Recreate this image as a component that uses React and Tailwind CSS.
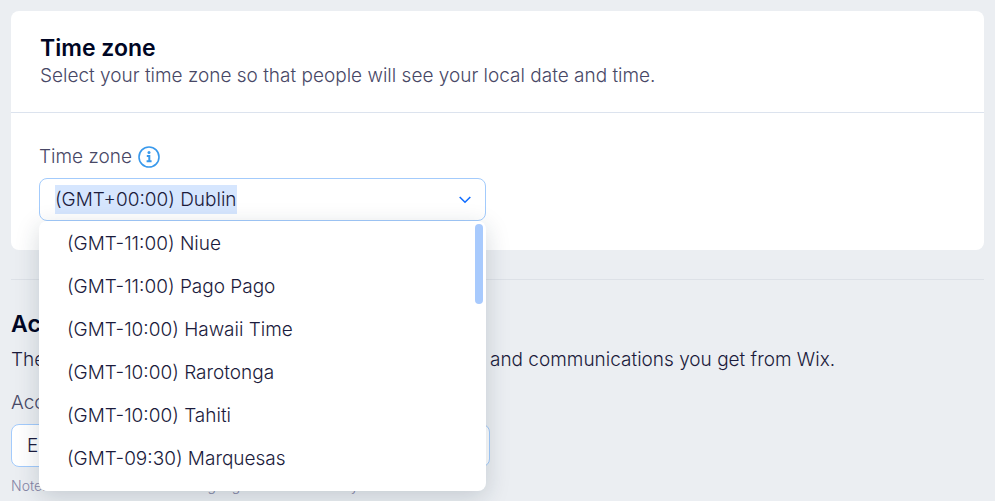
import { useEffect, useRef } from "react";

const zones = [
  "(GMT-11:00) Niue",
  "(GMT-11:00) Pago Pago",
  "(GMT-10:00) Hawaii Time",
  "(GMT-10:00) Rarotonga",
  "(GMT-10:00) Tahiti",
  "(GMT-09:30) Marquesas",
];

function InfoIcon() {
  return (
    <svg width="22" height="22" viewBox="0 0 22 22" fill="none" aria-hidden="true">
      <circle cx="11" cy="11" r="10" stroke="#3899ec" strokeWidth="1.6" />
      <circle cx="11" cy="6.6" r="1.5" fill="#3899ec" />
      <path d="M8.8 9.9h2.5v5M8.6 15.2h5" stroke="#3899ec" strokeWidth="2" />
    </svg>
  );
}

function Chevron() {
  return (
    <svg width="12" height="8" viewBox="0 0 12 8" fill="none" aria-hidden="true">
      <path d="M0.7 1L6 6.2L11.3 1" stroke="#116dff" strokeWidth="1.6" />
    </svg>
  );
}

function TimeZonePicker() {
  const input = useRef(null);

  useEffect(() => {
    input.current.focus();
    input.current.select();
  }, []);

  return (
    <div className="relative w-[447px] max-w-full">
      <div className="flex h-[43px] items-center rounded-lg border border-[#a3cbfc] bg-white pr-[14px] pl-[15px]">
        <input
          id="time-zone"
          ref={input}
          role="combobox"
          aria-expanded="true"
          aria-controls="zone-list"
          defaultValue="(GMT+00:00) Dublin"
          className="h-[29px] min-w-0 flex-1 bg-transparent leading-[29px] text-[#1b1b3c] caret-transparent outline-none selection:bg-[#d6e6fe] selection:text-[#1b1b3c]"
        />
        <Chevron />
      </div>
      <div className="absolute inset-x-0 top-full z-10 h-[270px] overflow-hidden rounded-lg bg-white shadow-[0_6px_24px_rgba(22,45,61,0.18)]">
        <ul id="zone-list" role="listbox" aria-label="Time zone" className="pt-px">
          {zones.map((zone) => (
            <li key={zone} role="option" aria-selected="false" className="h-[43px] pl-[28px] leading-[43px] text-[#1b1b3c]">
              {zone}
            </li>
          ))}
        </ul>
        <div className="absolute top-[3px] right-[3px] h-20 w-2 rounded-full bg-[#a8cafd]" />
      </div>
    </div>
  );
}

export default function App() {
  return (
    <main className="h-screen overflow-hidden bg-[#ebeef2] px-[11px] pt-[11px] font-['Inter',sans-serif] text-[19px] leading-6 font-light text-[#1b1b3c]">
      <section className="rounded-lg bg-white">
        <header className="h-[102px] border-b border-[#dce3ee] px-[29px] pt-[22px]">
          <h1 className="text-[23px] leading-[30px] font-semibold text-[#000624]">Time zone</h1>
          <p className="leading-[26px] text-[#484866]">
            Select your time zone so that people will see your local date and time.
          </p>
        </header>
        <div className="px-[28px] pt-8 pb-[29px]">
          <div className="mb-[9px] flex items-center gap-[6px]">
            <label htmlFor="time-zone" className="text-[#484866]">Time zone</label>
            <button type="button" aria-label="About time zones">
              <InfoIcon />
            </button>
          </div>
          <TimeZonePicker />
        </div>
      </section>
      <section className="mt-[29px] border-t border-[#dde1e7] pt-[29px]">
        <h2 className="text-[23px] leading-[30px] font-semibold text-[#000624]">Account Settings</h2>
        <p className="mt-2 leading-[26px]">
          The language you want to use with your Wix account, and communications you get from Wix.
        </p>
        <label htmlFor="language" className="mt-[18px] block text-[#484866]">
          Account Language
        </label>
        <select
          id="language"
          defaultValue="English"
          className="mt-[9px] block h-[43px] w-[479px] max-w-full appearance-none rounded-lg border border-[#a3cbfc] bg-white pl-[15px] text-[#1b1b3c]"
        >
          <option>English</option>
        </select>
        <p className="mt-[9px] text-[14px] leading-5 text-[#8585a5]">
          Note: This will not alter the language used on sites by others.
        </p>
      </section>
    </main>
  );
}
